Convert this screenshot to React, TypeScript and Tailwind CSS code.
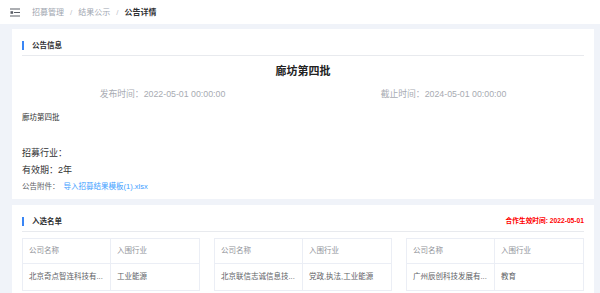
import React from "react";

const rows = [
  { company: "北京奇点智连科技有...", industry: "工业能源" },
  { company: "北京联信志诚信息技...", industry: "党政,执法,工业能源" },
  { company: "广州辰创科技发展有...", industry: "教育" },
];

function SectionTitle({ title, extra }: { title: string; extra?: React.ReactNode }) {
  return (
    <div className="h-[20px] flex items-center justify-between border-b border-[#e8eaee]">
      <div className="flex items-center gap-[8px]">
        <div className="w-[2px] h-[9px] bg-[#3a86f5]" />
        <span className="text-[7.5px] font-bold text-[#303133]">{title}</span>
      </div>
      {extra}
    </div>
  );
}

function FoldIcon() {
  return (
    <svg width="10" height="9" viewBox="0 0 10 9" className="text-[#5a5e66]">
      <rect x="0" y="0.5" width="10" height="1" fill="currentColor" />
      <rect x="4" y="4" width="6" height="1" fill="currentColor" />
      <rect x="0" y="7.5" width="10" height="1" fill="currentColor" />
      <rect x="0.5" y="3.2" width="2.6" height="2.6" fill="currentColor" />
    </svg>
  );
}

export default function App() {
  return (
    <div className="min-h-screen bg-[#f0f3f9] font-['Liberation_Sans','Noto_Sans_CJK_SC',sans-serif]">
      <div className="h-6 bg-white flex items-center pl-[10px] pt-[1px]">
        <FoldIcon />
        <div className="ml-[12px] flex items-center text-[8px]">
          <span className="text-[#a0a6b0]">招募管理</span>
          <span className="mx-[6px] text-[#c0c4cc]">/</span>
          <span className="text-[#a0a6b0]">结果公示</span>
          <span className="mx-[6px] text-[#c0c4cc]">/</span>
          <span className="text-[#303133] font-bold">公告详情</span>
        </div>
      </div>

      <div className="pl-3 pr-[6px] pt-[5px] flex flex-col gap-[6px]">
        <div className="bg-white px-[10px] pt-[7px] pb-[6px]">
          <SectionTitle title="公告信息" />
          <div className="mt-[7px] text-center text-[11px] leading-[16px] font-bold text-[#222]">
            廊坊第四批
          </div>
          <div className="mt-[8px] flex text-[8.8px] leading-[14px] text-[#a8abb2]">
            <div className="flex-1 text-center">发布时间：2022-05-01 00:00:00</div>
            <div className="flex-1 text-center">截止时间：2024-05-01 00:00:00</div>
          </div>
          <div className="mt-[11px] text-[7.5px] leading-[12px] text-[#333]">廊坊第四批</div>
          <div className="mt-[22px] text-[9px] leading-[14px] text-[#303133]">招募行业：</div>
          <div className="mt-[3px] text-[9px] leading-[14px] text-[#303133]">有效期：2年</div>
          <div className="mt-[4px] text-[7.5px] leading-[12px] text-[#606266]">
            公告附件：
            <span className="ml-[4px] text-[#409eff]">导入招募结果模板(1).xlsx</span>
          </div>
        </div>

        <div className="bg-white px-[10px] pt-[7px] pb-[10px]">
          <SectionTitle
            title="入选名单"
            extra={
              <span className="text-[6.7px] font-bold text-[#f00]">合作生效时间: 2022-05-01</span>
            }
          />
          <div className="mt-[6px] grid grid-cols-3 gap-[14px]">
            {rows.map((r) => (
              <div key={r.company} className="border border-[#ebeef5] text-[7.5px]">
                <div className="flex h-[25px] border-b border-[#ebeef5] text-[#909399]">
                  <div className="w-1/2 flex items-center pl-[6px] border-r border-[#ebeef5]">公司名称</div>
                  <div className="w-1/2 flex items-center pl-[6px]">入围行业</div>
                </div>
                <div className="flex h-[26px] text-[#606266]">
                  <div className="w-1/2 flex items-center pl-[6px] border-r border-[#ebeef5]">{r.company}</div>
                  <div className="w-1/2 flex items-center pl-[6px]">{r.industry}</div>
                </div>
              </div>
            ))}
          </div>
        </div>
      </div>
    </div>
  );
}
